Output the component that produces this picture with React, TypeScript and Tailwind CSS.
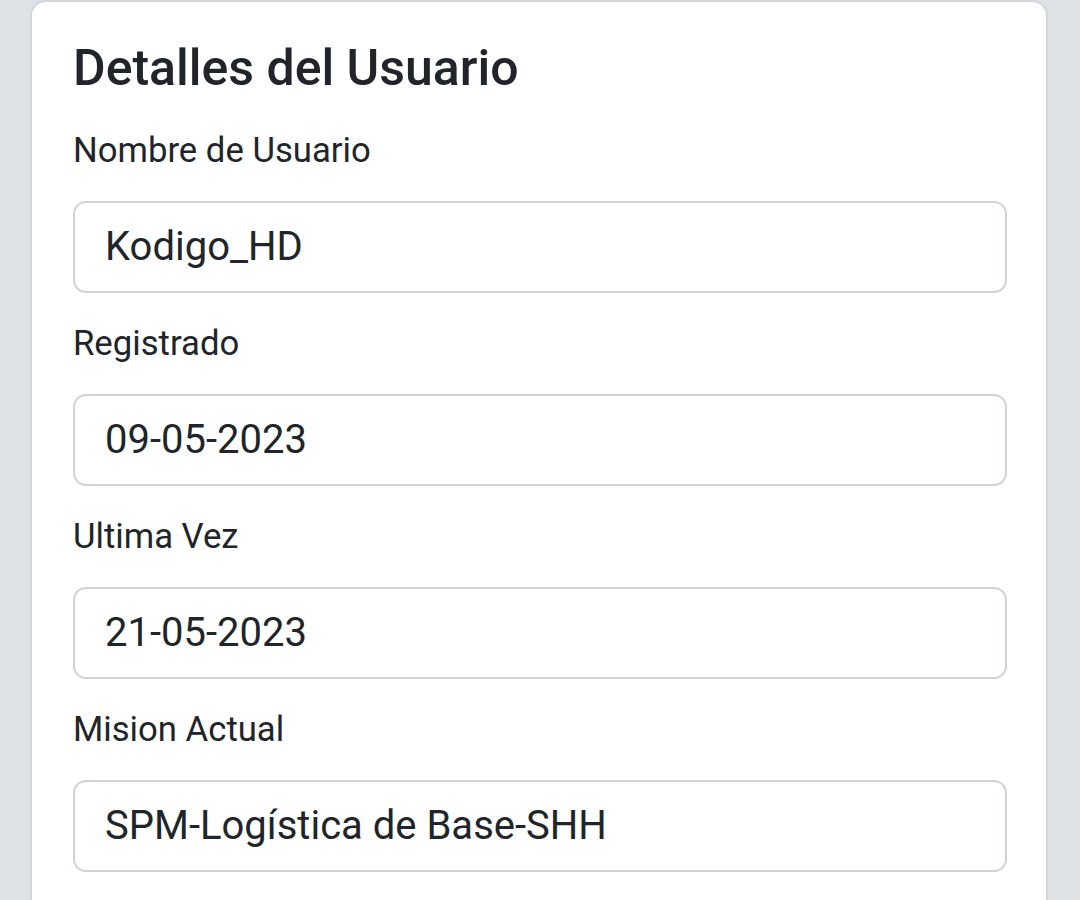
const fields = [
  { label: 'Nombre de Usuario', value: 'Kodigo_HD' },
  { label: 'Registrado', value: '09-05-2023' },
  { label: 'Ultima Vez', value: '21-05-2023' },
  { label: 'Mision Actual', value: 'SPM-Logística de Base-SHH' },
];

export default function App() {
  return (
    <div
      className="h-[900px] overflow-hidden bg-[#dee2e6] pl-[30px] pr-[32px] text-[#212529]"
      style={{ fontFamily: 'Roboto, "Noto Sans", sans-serif' }}
    >
      <div className="h-[960px] rounded-[16px] border-2 border-[#d3d6d9] bg-white pl-[41px] pr-[39px] pt-[36px]">
        <h2 className="mb-[28px] text-[50px] font-medium leading-[1.2]">Detalles del Usuario</h2>
        <div className="flex flex-col gap-[26px]">
          {fields.map((f) => (
            <div key={f.label} className="flex flex-col gap-[27px]">
              <label className="text-[34.7px] leading-[48px]">{f.label}</label>
              <div className="flex h-[92px] items-center rounded-[13px] border-2 border-[#ced4da] px-[30px] text-[40px]">
                {f.value}
              </div>
            </div>
          ))}
        </div>
      </div>
    </div>
  );
}
